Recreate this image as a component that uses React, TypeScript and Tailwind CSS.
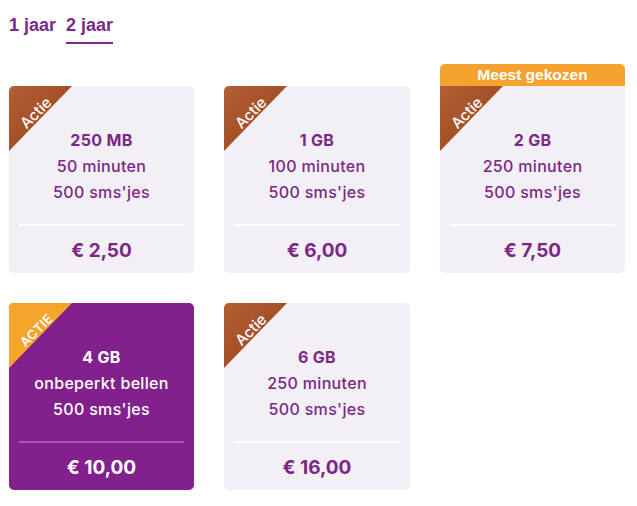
import React from "react";

type Plan = {
  data: string;
  minutes: string;
  sms: string;
  price: string;
  featured?: boolean;
  header?: string;
};

const plans: Plan[] = [
  { data: "250 MB", minutes: "50 minuten", sms: "500 sms'jes", price: "€ 2,50" },
  { data: "1 GB", minutes: "100 minuten", sms: "500 sms'jes", price: "€ 6,00" },
  { data: "2 GB", minutes: "250 minuten", sms: "500 sms'jes", price: "€ 7,50", header: "Meest gekozen" },
  { data: "4 GB", minutes: "onbeperkt bellen", sms: "500 sms'jes", price: "€ 10,00", featured: true },
  { data: "6 GB", minutes: "250 minuten", sms: "500 sms'jes", price: "€ 16,00" },
];

function Ribbon({ featured }: { featured?: boolean }) {
  return (
    <div
      className={
        "absolute left-0 top-0 w-[63px] h-[65px] [clip-path:polygon(0_0,100%_0,0_100%)] " +
        (featured
          ? "bg-[#f5a52c]"
          : "bg-[linear-gradient(135deg,#b35f33_0%,#a8532a_40%,#9c4a25_70%,#a85a30_100%)]")
      }
    >
      <span
        className={
          "absolute left-[1px] top-[18px] w-[52px] text-center -rotate-45 text-white font-['Inter',sans-serif] leading-[18px] " +
          (featured ? "text-[13px] font-semibold tracking-[0.02em]" : "text-[15px] font-medium")
        }
      >
        {featured ? "ACTIE" : "Actie"}
      </span>
    </div>
  );
}

function Card({ plan }: { plan: Plan }) {
  const f = plan.featured;
  return (
    <div className="flex flex-col justify-end">
      {plan.header && (
        <div className="h-[22px] rounded-t-[5px] bg-[#f6a22e] text-white text-center font-['Liberation_Sans',sans-serif] font-bold text-[15.5px] leading-[22px]">
          {plan.header}
        </div>
      )}
      <div
        className={
          "relative overflow-hidden h-[187px] flex flex-col items-center pt-[41px] px-[10px] font-['Inter',sans-serif] " +
          (plan.header ? "rounded-b-[5px] " : "rounded-[5px] ") +
          (f ? "bg-[#82218b] text-white" : "bg-[#f2f0f4] text-[#7c2787]")
        }
      >
        <Ribbon featured={f} />
        <div className="text-[16px] leading-[26px] font-bold tracking-[0.02em]">{plan.data}</div>
        <div className="text-[16px] leading-[26px] font-medium tracking-[0.02em]">{plan.minutes}</div>
        <div className="text-[16px] leading-[26px] font-medium tracking-[0.02em]">{plan.sms}</div>
        <div className={"mt-[19px] h-[2px] w-full " + (f ? "bg-[#a45aab]" : "bg-white")} />
        <div className="mt-[12px] text-[19px] leading-[26px] font-bold">{plan.price}</div>
      </div>
    </div>
  );
}

export default function App() {
  return (
    <div className="w-[637px] h-[506px] bg-white px-[9px] pt-[14px]">
      <div className="flex gap-[10px] font-['Liberation_Sans',sans-serif] font-bold text-[18px] leading-[22px] text-[#7b2a8a]">
        <div className="pb-[6px]">1 jaar</div>
        <div className="pb-[6px] border-b-2 border-[#7b2a8a]">2 jaar</div>
      </div>
      <div className="mt-[20px] grid grid-cols-[185px_186px_185px] gap-x-[30px] gap-y-[30px]">
        {plans.map((p, i) => (
          <Card key={i} plan={p} />
        ))}
      </div>
    </div>
  );
}
